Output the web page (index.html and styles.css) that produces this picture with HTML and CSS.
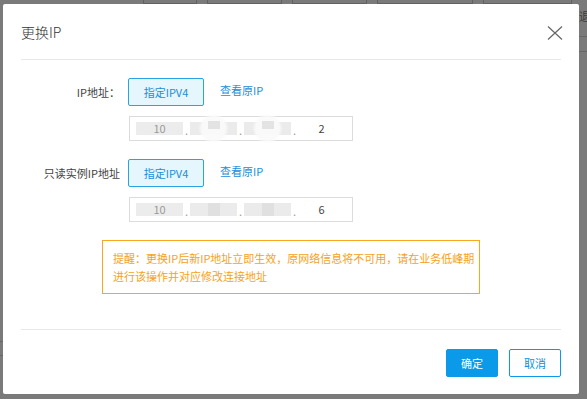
FILE: index.html
```html
<!DOCTYPE html>
<html>
<head>
<meta charset="UTF-8">
<title>更换IP</title>
<link rel="stylesheet" href="styles.css">
</head>
<body>
	<div class="page">
		<div class="toolbar">
			<span class="ghostBtn w52"></span>
			<span class="ghostBtn w73"></span>
			<span class="ghostBtn w73"></span>
			<span class="ghostBtn w94"></span>
			<span class="ghostBtn w87"></span>
		</div>
		<div class="sideRight">
			<span class="ghostText">退日</span>
			<span class="ghostLine"></span>
			<span class="ghostLine"></span>
		</div>
		<div class="sideLeft">
			<span class="ghostLine"></span>
			<span class="ghostLine"></span>
		</div>
	</div>

	<div class="mask">
		<div class="dialog">
			<div class="dialogHeader">
				<span class="dialogTitle">更换IP</span>
				<svg class="closeIcon" width="16" height="16" viewBox="0 0 16 16">
					<path d="M1 1.5 L15 14.5 M15 1.5 L1 14.5" stroke="#666" stroke-width="1.2" fill="none"/>
				</svg>
			</div>

			<div class="dialogBody">
				<div class="formRow">
					<div class="formLabel">IP地址：</div>
					<div class="formControl">
						<div class="choice">
							<button class="choiceBtn">指定IPV4</button>
							<a class="link">查看原IP</a>
						</div>
						<div class="ipBox">
							<span class="seg plain">10</span><span class="dot">.</span>
							<span class="seg blur"></span><span class="dot">.</span>
							<span class="seg blur"></span><span class="dot">.</span>
							<span class="seg last">2</span>
						</div>
					</div>
				</div>

				<div class="formRow">
					<div class="formLabel">只读实例IP地址</div>
					<div class="formControl">
						<div class="choice">
							<button class="choiceBtn">指定IPV4</button>
							<a class="link">查看原IP</a>
						</div>
						<div class="ipBox">
							<span class="seg plain">10</span><span class="dot">.</span>
							<span class="seg square"></span><span class="dot">.</span>
							<span class="seg square"></span><span class="dot">.</span>
							<span class="seg last">6</span>
						</div>
					</div>
				</div>

				<div class="warning">
					提醒：更换IP后新IP地址立即生效，原网络信息将不可用，请在业务低峰期进行该操作并对应修改连接地址
				</div>
			</div>

			<div class="dialogFooter">
				<button class="btn primary">确定</button>
				<button class="btn">取消</button>
			</div>
		</div>
	</div>
</body>
</html>
```

FILE: styles.css
```css
body {
	margin: 0px;
	background: #7a7a7a;
	font-family: "Noto Sans CJK SC", "Liberation Sans", sans-serif;
	width: 587px;
	height: 399px;
	overflow: hidden;
	position: relative;
}

/* dimmed page behind the dialog */
.page {
	height: 399px;
	position: relative;
}

.toolbar {
	display: flex;
	gap: 10px;
	padding-left: 143px;
}

.ghostBtn {
	height: 3px;
	border: 1px solid #616161;
	border-top: none;
}

.w52 { width: 52px; }
.w73 { width: 73px; }
.w94 { width: 94px; }
.w87 { width: 87px; }

.sideRight {
	position: absolute;
	right: 0px;
	top: 10px;
	width: 8px;
	display: flex;
	flex-direction: column;
	gap: 14px;
	overflow: hidden;
}

.ghostText {
	font-size: 11px;
	line-height: 12px;
	color: #3a3a3a;
	white-space: nowrap;
}

.sideRight .ghostLine, .sideLeft .ghostLine {
	height: 1px;
	background: #686868;
}

.sideLeft {
	position: absolute;
	left: 0px;
	top: 341px;
	width: 3px;
	display: flex;
	flex-direction: column;
	gap: 13px;
}

.mask {
	position: absolute;
	left: 3px;
	top: 4px;
}

.dialog {
	width: 576px;
	height: 390px;
	background: #fff;
	border-radius: 2px;
	box-sizing: border-box;
}

.dialogHeader {
	margin: 0px 18px;
	height: 55px;
	border-bottom: 1px solid #e8e8e8;
	display: flex;
	align-items: center;
	justify-content: space-between;
}

.dialogTitle {
	font-size: 14px;
	font-weight: 300;
	color: #333;
	margin-top: 1px;
}

.closeIcon {
	margin-right: -2px;
	margin-top: 2px;
}

.dialogBody {
	padding: 18px 18px 35px 18px;
	display: flex;
	flex-direction: column;
	gap: 18px;
}

.formRow {
	display: grid;
	grid-template-columns: 99px 1fr;
	column-gap: 8px;
}

.formLabel {
	font-size: 11px;
	line-height: 28px;
	color: #444;
	text-align: right;
	white-space: nowrap;
}

.choice {
	display: flex;
	align-items: center;
	gap: 16px;
}

.choiceBtn {
	width: 76px;
	height: 28px;
	border: 1px solid #2aa3e6;
	background: #e5f6fd;
	color: #1a8fd8;
	font-family: inherit;
	font-size: 11px;
	padding: 0px;
	border-radius: 2px;
}

.link {
	font-size: 11px;
	color: #1a8fd8;
	margin-top: -4px;
}

.ipBox {
	margin: 10px 0px 0px 1px;
	width: 224px;
	height: 25px;
	box-sizing: border-box;
	border: 1px solid #dcdcdc;
	display: flex;
	align-items: center;
	padding-left: 6px;
}

.seg {
	width: 47px;
	height: 13px;
	font-size: 11px;
	line-height: 13px;
	text-align: center;
	position: relative;
}

.seg.plain {
	background: #ececec;
	color: #9a9a9a;
}

.seg.last {
	color: #444;
}

.seg.blur, .seg.square {
	background: #ebebeb;
}

.seg.blur::before {
	content: "";
	position: absolute;
	left: 8px;
	top: -8px;
	width: 31px;
	height: 29px;
	border-radius: 50%;
	background: radial-gradient(circle, rgba(250, 250, 250, 0.95) 55%, rgba(250, 250, 250, 0) 72%);
}

.seg.blur::after, .seg.square::after {
	content: "";
	position: absolute;
	left: 18px;
	top: -1px;
	width: 12px;
	height: 8px;
	background: #e3e3e3;
}

.seg.square::after {
	top: 0px;
	height: 13px;
	background: #e0e0e0;
}

.dot {
	width: 7px;
	font-size: 11px;
	line-height: 13px;
	color: #999;
	padding-top: 3px;
	text-indent: 2px;
}

.warning {
	margin-left: 81px;
	width: 378px;
	box-sizing: border-box;
	border: 1px solid #f8a81c;
	padding: 8px 3px 8px 10px;
	font-size: 11px;
	line-height: 18px;
	color: #f5a21b;
}

.dialogFooter {
	margin: 0px 18px;
	border-top: 1px solid #e8e8e8;
	padding: 19px 0px;
	display: flex;
	justify-content: flex-end;
	gap: 11px;
}

.btn {
	width: 52px;
	height: 28px;
	font-family: inherit;
	font-size: 11px;
	border: 1px solid #0a9ae9;
	background: #fff;
	color: #0a8fe0;
	border-radius: 2px;
	padding: 0px;
}

.btn.primary {
	background: #0a9ae9;
	color: #fff;
}
```
